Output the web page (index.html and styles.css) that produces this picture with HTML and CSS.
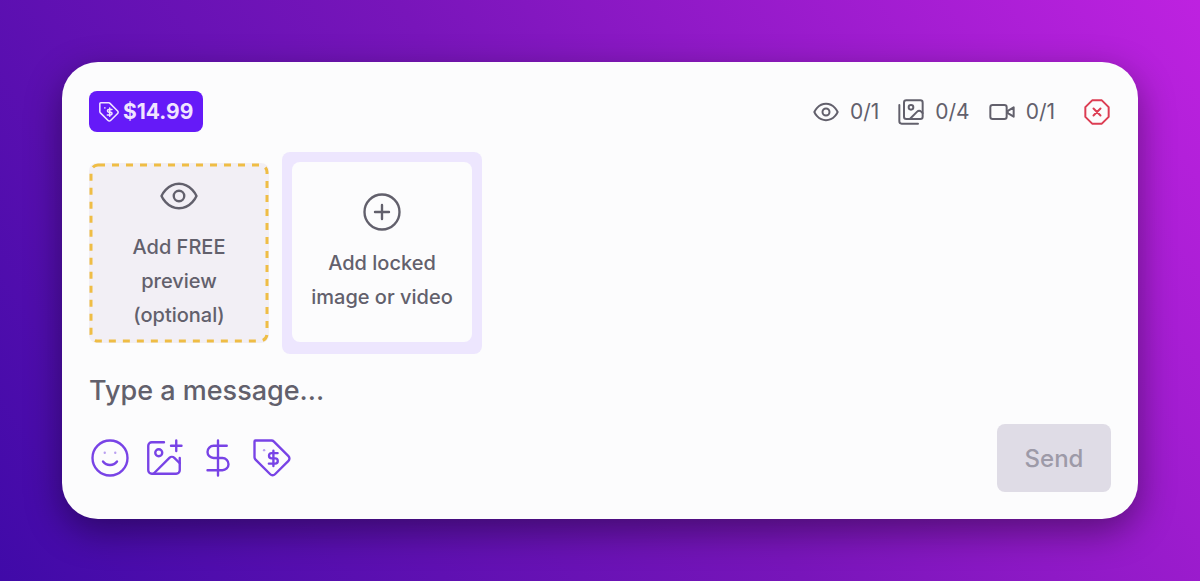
FILE: index.html
```html
<!DOCTYPE html>
<html lang="en">

<head>
	<meta charset="UTF-8">
	<meta name="viewport" content="width=device-width, initial-scale=1.0">
	<title>New message</title>
	<link rel="stylesheet" href="styles.css">
</head>

<body>
	<form class="composer">
		<div class="header">
			<button type="button" class="price">
				<svg class="icon" viewBox="0 0 24 24"><path d="M2 3a1 1 0 0 1 1-1h8.700a2 2 0 0 1 1.400.6l8.300 8.300a1.900 1.900 0 0 1 0 2.700l-7.700 7.700a1.900 1.900 0 0 1-2.700 0l-8.400-8.400A2 2 0 0 1 2 11.500z"/><path d="M7.500 7.500h.01M12.800 7.800v8.800M15.200 9.200h-3.400a1.500 1.500 0 0 0 0 3h2a1.500 1.500 0 0 1 0 3h-3.600"/></svg>
				<span>$14.99</span>
			</button>
			<div class="counts">
				<span class="count">
					<svg class="icon" viewBox="0 0 24 24"><path d="M2 12s3-7 10-7 10 7 10 7-3 7-10 7-10-7-10-7Z"/><circle cx="12" cy="12" r="3"/></svg>
					0/1
				</span>
				<span class="count">
					<svg class="icon" viewBox="0 0 24 24"><path d="M18 22H4a2 2 0 0 1-2-2V6"/><path d="m22 13-1.300-1.300a2.400 2.400 0 0 0-3.400 0L11 18"/><circle cx="12" cy="8" r="2"/><rect width="16" height="16" x="6" y="2" rx="2"/></svg>
					0/4
				</span>
				<span class="count">
					<svg class="icon" viewBox="0 0 24 24"><path d="m17 11 5-3v8l-5-3z"/><rect x="2" y="6" width="14" height="12" rx="2"/></svg>
					0/1
				</span>
				<button type="button" class="remove" aria-label="Remove">
					<svg class="icon" viewBox="0 0 24 24"><path d="M7.860 2h8.280L22 7.860v8.280L16.140 22H7.860L2 16.140V7.860z"/><path d="m15 9-6 6M9 9l6 6"/></svg>
				</button>
			</div>
		</div>

		<div class="media">
			<button type="button" class="tile tile-free">
				<svg class="dashes"><rect x="2" y="2" width="176" height="176" rx="7"/></svg>
				<svg class="icon icon-big" viewBox="0 0 24 24"><path d="M2 12s3-7 10-7 10 7 10 7-3 7-10 7-10-7-10-7Z"/><circle cx="12" cy="12" r="3"/></svg>
				<span>Add FREE preview (optional)</span>
			</button>
			<div class="locked">
				<button type="button" class="tile">
					<svg class="icon icon-big" viewBox="0 0 24 24"><circle cx="12" cy="12" r="10"/><path d="M8 12h8M12 8v8"/></svg>
					<span>Add locked image or video</span>
				</button>
			</div>
		</div>

		<input class="message" type="text" placeholder="Type a message..." aria-label="Message">

		<div class="footer">
			<div class="tools">
				<button type="button" class="tool" aria-label="Emoji">
					<svg class="icon icon-big" viewBox="0 0 24 24"><circle cx="12" cy="12" r="10"/><path d="M8 14s1.500 2 4 2 4-2 4-2"/><path class="faint" d="M9 9h.01M15 9h.01"/></svg>
				</button>
				<button type="button" class="tool" aria-label="Add image">
					<svg class="icon icon-big" viewBox="0 0 24 24"><path d="M12 3H5a2 2 0 0 0-2 2v14a2 2 0 0 0 2 2h14a2 2 0 0 0 2-2v-7"/><path d="M16 5h6M19 2v6"/><circle cx="9" cy="9" r="2"/><path d="m21 15-3.086-3.086a2 2 0 0 0-2.828 0L6 21"/></svg>
				</button>
				<button type="button" class="tool" aria-label="Send tip">
					<svg class="icon icon-big" viewBox="0 0 24 24"><path d="M12 2v20M17 5H9.500a3.500 3.500 0 0 0 0 7h5a3.500 3.500 0 0 1 0 7H6"/></svg>
				</button>
				<button type="button" class="tool" aria-label="Set price">
					<svg class="icon icon-big" viewBox="0 0 24 24"><path d="M2 2.500a.5.5 0 0 1 .5-.5h9.200a2 2 0 0 1 1.400.6l8.300 8.300a1.900 1.900 0 0 1 0 2.700l-7.700 7.700a1.900 1.900 0 0 1-2.700 0l-8.400-8.400A2 2 0 0 1 2 11.500z"/><path d="M12.800 7.800v8.800M15.200 9.200h-3.400a1.500 1.500 0 0 0 0 3h2a1.500 1.500 0 0 1 0 3h-3.600"/><path class="faint" d="M7.500 7.500h.01"/></svg>
				</button>
			</div>
			<button type="submit" class="send" disabled>Send</button>
		</div>
	</form>
</body>

</html>
```
FILE: styles.css
```css
* {
	box-sizing: border-box;
}

body {
	margin: 0;
	min-height: 100vh;
	padding: 62px;
	background: linear-gradient(55deg, #400aa8, #7815ba 50%, #be22e0);
	font-family: Inter, "Liberation Sans", sans-serif;
	color: #62606c;
}

button {
	margin: 0;
	padding: 0;
	border: 0;
	background: none;
	font: inherit;
	color: inherit;
}

.composer {
	padding: 29px 27px 27px;
	border-radius: 36px;
	background: #fcfcfd;
	box-shadow: 0 12px 36px rgba(0, 0, 0, 0.4);
}

.icon {
	display: block;
	flex: none;
	width: 28px;
	height: 28px;
	fill: none;
	stroke: currentColor;
	stroke-width: 1.7;
	stroke-linecap: round;
	stroke-linejoin: round;
}

.icon-big {
	width: 42px;
	height: 42px;
	stroke-width: 1.35;
}

.faint {
	opacity: 0.5;
}

.header {
	display: flex;
	align-items: center;
	justify-content: space-between;
}

.price {
	display: flex;
	align-items: center;
	gap: 3px;
	height: 41px;
	padding: 0 10px 0 9px;
	border-radius: 8px;
	background: #651af8;
	color: #f0e4ff;
	font-size: 21px;
	font-weight: 700;
}

.price .icon {
	width: 22px;
	height: 22px;
}

.counts {
	display: flex;
	align-items: center;
	gap: 18px;
	font-size: 21px;
}

.count {
	display: flex;
	align-items: center;
	gap: 10px;
}

.remove {
	margin-left: 10px;
	color: #dc3d53;
}

.media {
	display: flex;
	align-items: center;
	gap: 13px;
	margin-top: 20px;
}

.tile {
	display: flex;
	flex-direction: column;
	align-items: center;
	justify-content: center;
	gap: 13px;
	width: 180px;
	height: 180px;
	padding: 0 12px;
	border-radius: 8px;
	background: #fcfcfd;
	font-size: 20px;
	font-weight: 500;
	line-height: 34px;
}

.tile-free {
	position: relative;
	padding: 0 32px;
	background: #f2eff5;
}

/* longer gaps than border-style: dashed gives */
.dashes {
	position: absolute;
	top: 0;
	left: 0;
	width: 100%;
	height: 100%;
	fill: none;
	stroke: #efbd45;
	stroke-width: 3;
	stroke-dasharray: 7 7;
}

.locked {
	padding: 10px 10px 12px;
	border-radius: 8px;
	background: #ede6fe;
}

.message {
	display: block;
	width: 100%;
	height: 44px;
	margin-top: 14px;
	padding: 0;
	border: 0;
	outline: 0;
	background: none;
	font: inherit;
	font-size: 27px;
	font-weight: 500;
	color: inherit;
}

.message::placeholder {
	color: inherit;
	opacity: 1;
}

.footer {
	display: flex;
	align-items: center;
	justify-content: space-between;
	margin-top: 12px;
}

.tools {
	display: flex;
	gap: 12px;
	color: #7843e6;
}

.send {
	width: 114px;
	height: 68px;
	border-radius: 8px;
	background: #dfdce6;
	color: #9d9aa8;
	font-size: 24px;
	font-weight: 500;
}
```
